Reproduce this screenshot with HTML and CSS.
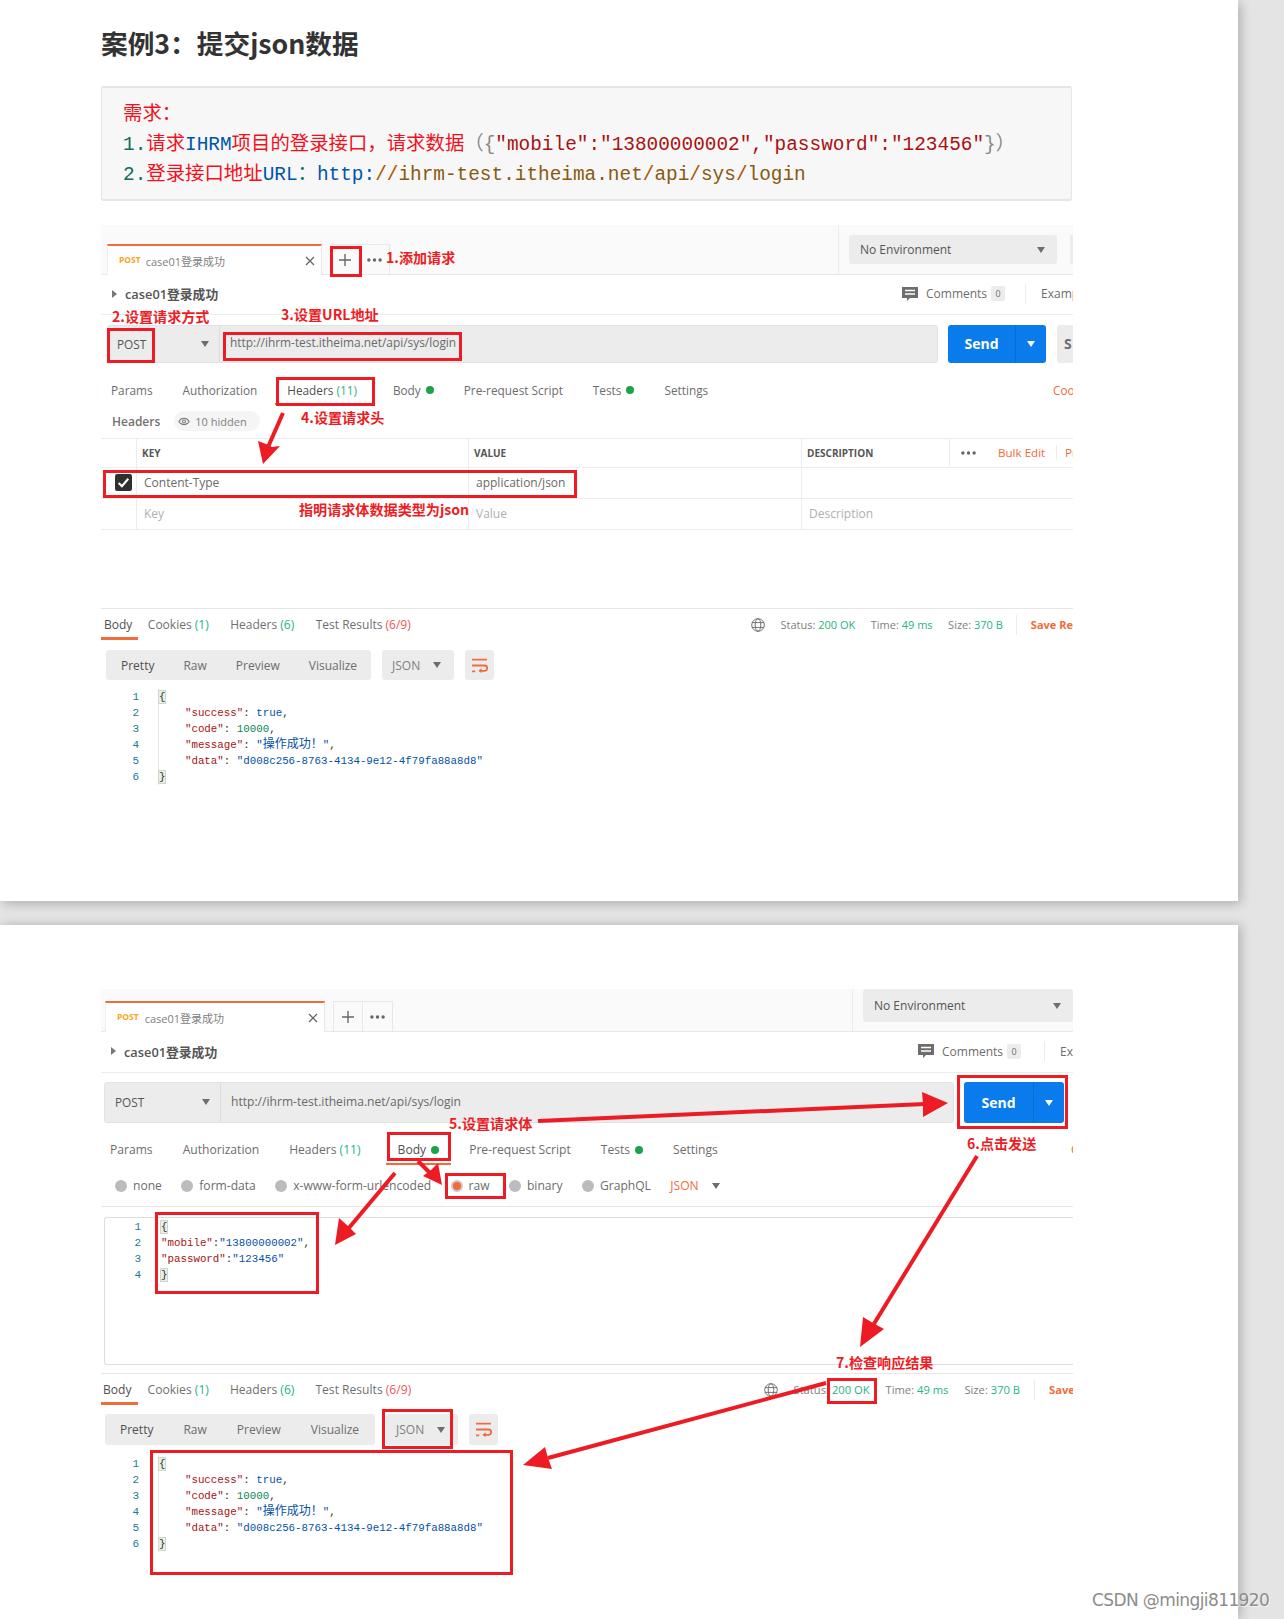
FILE: index.html
```html
<!DOCTYPE html>
<html lang="zh">
<head>
<meta charset="utf-8">
<title>案例3：提交json数据</title>
<link rel="stylesheet" href="styles.css">
</head>
<body>
<section class="page page-one">
  <h1 class="title">案例3：提交json数据</h1>
  <pre class="req"><span class="r">需求：</span>
<span class="g">1.</span><span class="r">请求</span><span class="b">IHRM</span><span class="r">项目的登录接口，请求数据</span><span class="k">（{</span><span class="d">"mobile":"13800000002","password":"123456"</span><span class="k">}）</span>
<span class="g">2.</span><span class="r">登录接口地址</span><span class="b">URL</span><span class="g">：</span><span class="b">http:</span><span class="o">//</span><span class="w">ihrm-test.itheima.net</span><span class="o">/</span><span class="w">api</span><span class="o">/</span><span class="w">sys</span><span class="o">/</span><span class="w">login</span></pre>

  <div class="panel p1">
    <div class="tabbar">
      <div class="rtab"><span class="post">POST</span><span class="rname">case01登录成功</span>
        <svg class="close" viewBox="0 0 10 10"><path d="M1 1l8 8M9 1l-8 8"/></svg></div>
      <div class="adds">
        <span class="addbtn"><svg class="plus" viewBox="0 0 14 14"><path d="M7 0v14M0 7h14"/></svg></span>
        <span class="addbtn last"><svg class="more" viewBox="0 0 16 4"><circle cx="2" cy="2" r="1.8"/><circle cx="8" cy="2" r="1.8"/><circle cx="14" cy="2" r="1.8"/></svg></span>
      </div>
      <div class="envwrap"><div class="env"><span>No Environment</span><i class="caret"></i></div><div class="envstub"></div></div>
    </div>
    <div class="namerow">
      <i class="tri"></i><span class="reqname">case01登录成功</span>
      <div class="meta">
        <svg class="cmt" viewBox="0 0 16 16"><path d="M0 1h16v11H8l-3 3v-3H0z"/><path class="cl" d="M3 4.5h10M3 8h10"/></svg>
        <span class="cmtlabel">Comments</span><span class="badge">0</span><span class="vsep"></span><span class="cmtlabel">Examples</span>
      </div>
    </div>
    <div class="urlrow">
      <div class="urlbar">
        <div class="method"><span>POST</span><i class="caret"></i></div>
        <div class="url">http://ihrm-test.itheima.net/api/sys/login</div>
      </div>
      <div class="send"><span class="sendlabel">Send</span><span class="sendarrow"><i class="caret white"></i></span></div>
      <div class="save">S</div>
    </div>
    <nav class="tabs">
      <span class="tab">Params</span>
      <span class="tab">Authorization</span>
      <span class="tab active">Headers <em class="grn">(11)</em></span>
      <span class="tab">Body<i class="dot"></i></span>
      <span class="tab">Pre-request Script</span>
      <span class="tab">Tests<i class="dot"></i></span>
      <span class="tab">Settings</span>
      <span class="tab cookies">Cookies</span>
    </nav>
    <div class="hdrbar"><strong>Headers</strong>
      <span class="pill"><svg class="eye" viewBox="0 0 14 10"><path d="M1 5c3-5 9-5 12 0-3 5-9 5-12 0z"/><circle cx="7" cy="5" r="1.8"/></svg>10 hidden</span></div>
    <div class="grid">
      <div class="cell c0 th"></div><div class="cell th">KEY</div><div class="cell th">VALUE</div>
      <div class="cell th dcol"><span class="dlabel">DESCRIPTION</span><span class="dmore"><svg class="more" viewBox="0 0 16 4"><circle cx="2" cy="2" r="1.8"/><circle cx="8" cy="2" r="1.8"/><circle cx="14" cy="2" r="1.8"/></svg></span><span class="bulk">Bulk Edit</span><span class="presets">Presets</span></div>
      <div class="cell c0"><svg class="check" viewBox="0 0 16 16"><rect width="16" height="16" rx="2"/><path d="M3.5 8.5l3 3 6-7"/></svg></div>
      <div class="cell">Content-Type</div><div class="cell">application/json</div><div class="cell"></div>
      <div class="cell c0"></div><div class="cell ph">Key</div><div class="cell ph">Value</div><div class="cell ph">Description</div>
    </div>
    <div class="restabs">
      <span class="rt on">Body</span><span class="rt">Cookies <em class="grn">(1)</em></span><span class="rt">Headers <em class="grn">(6)</em></span><span class="rt">Test Results <em class="red">(6/9)</em></span>
      <div class="status">
        <svg class="globe" viewBox="0 0 14 14"><circle cx="7" cy="7" r="6.3"/><ellipse cx="7" cy="7" rx="2.8" ry="6.3"/><path d="M1 4.6h12M1 9.4h12"/></svg>
        <span class="st">Status: <b>200 OK</b></span><span class="st">Time: <b>49 ms</b></span><span class="st">Size: <b>370 B</b></span><span class="vsep"></span><span class="savere">Save Response</span>
      </div>
    </div>
    <div class="toolbar">
      <div class="views"><span class="v on">Pretty</span><span class="v">Raw</span><span class="v">Preview</span><span class="v">Visualize</span></div>
      <div class="fmt"><span>JSON</span><i class="caret"></i></div>
      <div class="wrap"><svg viewBox="0 0 16 14"><path d="M1 1.5h14M1 7h12c3 0 3 5 0 5H8M1 12.5h3"/><path class="wh" d="M10 9.5L7 12l3 2.2z"/></svg></div>
    </div>
    <div class="code">
      <div class="line"><span class="ln">1</span><span class="src"><span class="brace">{</span></span></div>
      <div class="line"><span class="ln">2</span><span class="src">    <span class="key">"success"</span>: <span class="str">true</span>,</span></div>
      <div class="line"><span class="ln">3</span><span class="src">    <span class="key">"code"</span>: <span class="num">10000</span>,</span></div>
      <div class="line"><span class="ln">4</span><span class="src">    <span class="key">"message"</span>: <span class="str">"<span class="cjk">操作成功！</span>"</span>,</span></div>
      <div class="line"><span class="ln">5</span><span class="src">    <span class="key">"data"</span>: <span class="str">"d008c256-8763-4134-9e12-4f79fa88a8d8"</span></span></div>
      <div class="line"><span class="ln">6</span><span class="src"><span class="brace">}</span></span></div>
    </div>
  </div>

  <div class="overlay">
    <span class="mark a1"></span><span class="mark a2"></span><span class="mark a3"></span><span class="mark a4"></span><span class="mark a5"></span>
    <span class="note n1">1.添加请求</span><span class="note n2">2.设置请求方式</span><span class="note n3">3.设置URL地址</span><span class="note n4">4.设置请求头</span><span class="note n5">指明请求体数据类型为json</span>
    <svg class="arrows" viewBox="0 0 1238 901"><path class="ar" d="M283 413l-15 34"/><path class="ah" d="M263 464l-5-23 8 3 6 3 8-1z"/></svg>
  </div>
</section>

<section class="page page-two">
  <div class="panel p2">
    <div class="tabbar">
      <div class="rtab"><span class="post">POST</span><span class="rname">case01登录成功</span>
        <svg class="close" viewBox="0 0 10 10"><path d="M1 1l8 8M9 1l-8 8"/></svg></div>
      <div class="adds">
        <span class="addbtn"><svg class="plus" viewBox="0 0 14 14"><path d="M7 0v14M0 7h14"/></svg></span>
        <span class="addbtn last"><svg class="more" viewBox="0 0 16 4"><circle cx="2" cy="2" r="1.8"/><circle cx="8" cy="2" r="1.8"/><circle cx="14" cy="2" r="1.8"/></svg></span>
      </div>
      <div class="envwrap"><div class="env"><span>No Environment</span><i class="caret"></i></div></div>
    </div>
    <div class="namerow">
      <i class="tri"></i><span class="reqname">case01登录成功</span>
      <div class="meta">
        <svg class="cmt" viewBox="0 0 16 16"><path d="M0 1h16v11H8l-3 3v-3H0z"/><path class="cl" d="M3 4.5h10M3 8h10"/></svg>
        <span class="cmtlabel">Comments</span><span class="badge">0</span><span class="vsep"></span><span class="cmtlabel">Examples</span>
      </div>
    </div>
    <div class="urlrow">
      <div class="urlbar">
        <div class="method"><span>POST</span><i class="caret"></i></div>
        <div class="url">http://ihrm-test.itheima.net/api/sys/login</div>
      </div>
      <div class="send"><span class="sendlabel">Send</span><span class="sendarrow"><i class="caret white"></i></span></div>
    </div>
    <nav class="tabs">
      <span class="tab">Params</span>
      <span class="tab">Authorization</span>
      <span class="tab">Headers <em class="grn">(11)</em></span>
      <span class="tab active">Body<i class="dot"></i></span>
      <span class="tab">Pre-request Script</span>
      <span class="tab">Tests<i class="dot"></i></span>
      <span class="tab">Settings</span>
      <span class="tab cookies">Cookies</span>
    </nav>
    <div class="modes">
      <span class="mode"><i class="radio"></i>none</span>
      <span class="mode"><i class="radio"></i>form-data</span>
      <span class="mode"><i class="radio"></i>x-www-form-urlencoded</span>
      <span class="mode"><i class="radio sel"></i>raw</span>
      <span class="mode"><i class="radio"></i>binary</span>
      <span class="mode"><i class="radio"></i>GraphQL</span>
      <span class="json">JSON</span><i class="caret"></i>
    </div>
    <div class="editor">
      <div class="line"><span class="ln">1</span><span class="src"><span class="brace">{</span></span></div>
      <div class="line"><span class="ln">2</span><span class="src"><span class="key">"mobile"</span>:<span class="str">"13800000002"</span>,</span></div>
      <div class="line"><span class="ln">3</span><span class="src"><span class="key">"password"</span>:<span class="str">"123456"</span></span></div>
      <div class="line"><span class="ln">4</span><span class="src"><span class="brace">}</span></span></div>
    </div>
    <div class="restabs">
      <span class="rt on">Body</span><span class="rt">Cookies <em class="grn">(1)</em></span><span class="rt">Headers <em class="grn">(6)</em></span><span class="rt">Test Results <em class="red">(6/9)</em></span>
      <div class="status">
        <svg class="globe" viewBox="0 0 14 14"><circle cx="7" cy="7" r="6.3"/><ellipse cx="7" cy="7" rx="2.8" ry="6.3"/><path d="M1 4.6h12M1 9.4h12"/></svg>
        <span class="st">Status: <b>200 OK</b></span><span class="st">Time: <b>49 ms</b></span><span class="st">Size: <b>370 B</b></span><span class="vsep"></span><span class="savere">Save Response</span>
      </div>
    </div>
    <div class="toolbar">
      <div class="views"><span class="v on">Pretty</span><span class="v">Raw</span><span class="v">Preview</span><span class="v">Visualize</span></div>
      <div class="fmt"><span>JSON</span><i class="caret"></i></div>
      <div class="wrap"><svg viewBox="0 0 16 14"><path d="M1 1.5h14M1 7h12c3 0 3 5 0 5H8M1 12.5h3"/><path class="wh" d="M10 9.5L7 12l3 2.2z"/></svg></div>
    </div>
    <div class="code">
      <div class="line"><span class="ln">1</span><span class="src"><span class="brace">{</span></span></div>
      <div class="line"><span class="ln">2</span><span class="src">    <span class="key">"success"</span>: <span class="str">true</span>,</span></div>
      <div class="line"><span class="ln">3</span><span class="src">    <span class="key">"code"</span>: <span class="num">10000</span>,</span></div>
      <div class="line"><span class="ln">4</span><span class="src">    <span class="key">"message"</span>: <span class="str">"<span class="cjk">操作成功！</span>"</span>,</span></div>
      <div class="line"><span class="ln">5</span><span class="src">    <span class="key">"data"</span>: <span class="str">"d008c256-8763-4134-9e12-4f79fa88a8d8"</span></span></div>
      <div class="line"><span class="ln">6</span><span class="src"><span class="brace">}</span></span></div>
    </div>
  </div>

  <div class="overlay">
    <svg class="arrows" viewBox="0 0 1238 694">
      <path class="ar" d="M538 196L925 179"/><path class="ah" d="M948 178L922 167l1 12 0 13z"/>
      <path class="ar" d="M418 236L432 250"/><path class="ah" d="M442 260L438 238l-7 7-8 6z"/>
      <path class="ar" d="M395 248L348 304"/><path class="ah" d="M335 320L339 293l9 8 8 8z"/>
      <path class="ar" d="M977 231L872 402"/><path class="ah" d="M860 422L863 392l10 6 11 6z"/>
      <path class="ar" d="M826 458L548 533"/><path class="ah" d="M523 540L545 522l3 11 4 11z"/>
    </svg>
    <span class="mark b1"></span><span class="mark b2"></span><span class="mark b3"></span><span class="mark b4"></span><span class="mark b5"></span><span class="mark b6"></span><span class="mark b7"></span>
    <span class="note m5">5.设置请求体</span><span class="note m6">6.点击发送</span><span class="note m7">7.检查响应结果</span>
  </div>
  <div class="wm">CSDN @mingji811920</div>
</section>
</body>
</html>
```

FILE: styles.css
```css
* { box-sizing: border-box; }
html, body { margin: 0; padding: 0; }
body {
  width: 1284px; height: 1619px; overflow: hidden; background: #e4e4e4;
  font-family: "Open Sans", "Noto Sans CJK SC", sans-serif; color: #6d6d6d;
}
em { font-style: normal; }
i { display: block; }

.page {
  position: relative; width: 1238px; background: #fff; padding-left: 101px;
  box-shadow: 3px 3px 10px rgba(0,0,0,.22);
}
.page-one { height: 901px; margin-bottom: 24px; padding-top: 21px; }
.page-two { height: 694px; padding-top: 64px; box-shadow: 3px 0 10px rgba(0,0,0,.22); }

.title {
  margin: 0; width: 971px; height: 44px; font: 700 26.7px/44px "Noto Sans CJK SC", sans-serif; color: #333;
}
.req {
  margin: 21px 0 24px; width: 971px; height: 115px; padding: 12px 20px 0 21px; background: #f7f7f7;
  border: 1px solid #e3e6ea; border-width: 2px 1px; border-radius: 3px;
  font: 19.4px/30px "Liberation Mono", "Noto Sans CJK SC", monospace; color: #333;
}
.req .r { color: #f01020; }
.req .g { color: #0b6f5a; }
.req .b { color: #0055aa; }
.req .k { color: #8a8a8a; }
.req .d { color: #aa1111; }
.req .o { color: #aa5500; }
.req .w { color: #875a10; }

.panel { width: 972px; overflow: hidden; font-size: 11.8px; }
.tabbar { display: flex; align-items: flex-end; background: #fafafa; border-bottom: 1px solid #e8e8e8; }
.p1 .tabbar { height: 50px; padding-left: 6px; }
.p2 .tabbar { height: 43px; padding-left: 4px; }
.rtab {
  display: flex; align-items: center; background: #fff; height: 31px; margin-bottom: -1px;
  border-top: 2px solid #f26b3a; border-right: 1px solid #e8e8e8; border-left: 1px solid #f0f0f0;
  width: 215px; padding-left: 11px; font-size: 11px; color: #808080;
}
.p2 .rtab { width: 220px; }
.post { font: 700 8.5px/1 "Open Sans", sans-serif; color: #f5a623; margin-right: 5px; }
.p2 .rname { margin-left: 1px; }
.rname { flex: 1; }
.close { width: 10px; height: 10px; margin-right: 6px; fill: none; stroke: #666; stroke-width: 1.3; }
.adds { display: flex; height: 31px; margin-left: 8px; margin-bottom: -1px; border: 1px solid #e8e8e8; border-bottom: 0; }
.addbtn { display: flex; align-items: center; justify-content: center; width: 29px; border-right: 1px solid #e8e8e8; }
.addbtn.last { border-right: 0; }
.more { width: 15px; height: 4px; fill: #666; flex-shrink: 0; }
.plus { width: 12px; height: 12px; fill: none; stroke: #666; stroke-width: 1.6; }
.envwrap { margin-left: auto; align-self: stretch; display: flex; border-left: 1px solid #ececec; padding-left: 10px; padding-top: 10px; }
.p1 .envwrap { width: 235px; }
.p2 .envwrap { width: 221px; padding-top: 0; }
.env {
  display: flex; align-items: center; justify-content: space-between; background: #ececec; border-radius: 3px;
  padding: 0 12px 0 11px; font-size: 12px; font-weight: 500; color: #555; height: 29px; width: 208px; flex-shrink: 0;
}
.p2 .env { width: 210px; height: 33px; }
.envstub { width: 14px; flex-shrink: 0; height: 29px; margin-left: 13px; background: #ececec; }
.caret { width: 0; height: 0; border: 4px solid transparent; border-top: 6px solid #6d6d6d; border-bottom: 0; flex-shrink: 0; }
.caret.white { border-top-color: #fff; }

.namerow { display: flex; align-items: center; height: 40px; border-bottom: 1px solid #ececec; padding-left: 11px; padding-bottom: 2px; }
.p2 .namerow { height: 41px; padding-left: 10px; }
.tri { width: 0; height: 0; border: 4px solid transparent; border-left: 5px solid #777; border-right: 0; margin-right: 8px; }
.reqname { font-size: 12.8px; font-weight: 600; color: #555; }
.meta { margin-left: auto; display: flex; align-items: center; width: 171px; flex-shrink: 0; white-space: nowrap; }
.p2 .meta { width: 155px; }
.cmt { width: 16px; height: 16px; fill: #6d6d6d; margin-right: 8px; flex-shrink: 0; }
.cl { fill: none; stroke: #fff; stroke-width: 1.4; }
.cmtlabel { font-size: 12px; color: #6d6d6d; font-weight: 400; }
.badge { width: 14px; height: 15px; background: #ececec; border-radius: 2px; font-size: 9px; text-align: center; line-height: 15px; margin-left: 4px; flex-shrink: 0; }
.vsep { width: 1px; height: 20px; background: #ececec; margin: 0 15px 0 20px; flex-shrink: 0; }
.p2 .meta .vsep { margin-left: 23px; }

.urlrow { display: flex; padding: 10px 0 0 6px; }
.p2 .urlrow { padding: 9px 0 0 3px; }
.urlbar { display: flex; width: 831px; height: 38px; background: #ececec; border: 1px solid #e2e2e2; border-radius: 3px; flex-shrink: 0; }
.p2 .urlbar { width: 850px; height: 41px; }
.method { display: flex; align-items: center; justify-content: space-between; width: 112px; padding: 0 10px 0 9px; border-right: 1px solid #dcdcdc; color: #555; font-weight: 500; flex-shrink: 0; }
.p2 .method { width: 116px; padding: 0 10px 2px 10px; }
.url { padding: 8px 10px 0; color: #6a6a6a; font-size: 11.9px; }
.p2 .url { padding-top: 10px; font-size: 12.1px; }
.send { display: flex; height: 38px; width: 98px; margin-left: 10px; background: #097bed; border-radius: 3px; color: #fff; font-size: 14px; font-weight: 700; flex-shrink: 0; }
.p2 .send { height: 41px; width: 100px; margin-left: 10px; }
.sendlabel { flex: 1; text-align: center; line-height: 38px; }
.p2 .sendlabel { line-height: 41px; }
.sendarrow { width: 31px; border-left: 1px solid #0a6dd2; display: flex; align-items: center; justify-content: center; }
.save { width: 40px; height: 38px; margin-left: 11px; background: #ececec; border-radius: 3px; padding-left: 7px; font-size: 14px; font-weight: 700; line-height: 38px; flex-shrink: 0; }

.tabs { display: flex; height: 30px; padding-left: 10px; gap: 30px; margin-top: 12px; white-space: nowrap; align-items: center; position: relative; }
.p2 .tabs { padding-left: 9px; height: 31px; gap: 30px; font-size: 12.1px; margin-top: 11px; }
.tab { display: flex; align-items: center; white-space: pre; height: 100%; position: relative; }
.tab.active::after { content: ""; position: absolute; left: -12px; right: -12px; bottom: 0; height: 2px; background: #f26b3a; }
.tab.active { color: #505050; }
.p1 .tab.active { margin-right: 6px; }
.p2 .tab.active { margin-left: 7px; }
.grn { color: #26b47f; }
.red { color: #eb5757; }
.dot { width: 8px; height: 8px; border-radius: 50%; background: #1da24a; margin-left: 5px; }
.cookies { color: #f26b3a; position: absolute; left: 952px; }
.p2 .cookies { left: 970px; }

.hdrbar { display: flex; align-items: center; height: 33px; padding: 0 0 1px 11px; font-size: 12px; color: #707070; }
.hdrbar strong { font-weight: 600; }
.pill { display: flex; align-items: center; margin-left: 14px; height: 20px; padding: 0 13px 0 2px; border-radius: 10px; background: #f5f5f5; font-size: 11px; color: #808080; }
.eye { width: 12px; height: 9px; margin: 0 5px 0 2px; fill: none; stroke: #777; stroke-width: 1.2; }

.grid { display: grid; grid-template-columns: 36px 332px 333px 1fr; grid-template-rows: 29px 31px 31px; border-top: 1px solid #ececec; margin-bottom: 78px; }
.cell { display: flex; align-items: center; padding: 0 0 2px 7px; border-bottom: 1px solid #ececec; border-right: 1px solid #ececec; color: #6a6a6a; font-size: 12px; white-space: nowrap; overflow: hidden; }
.cell:nth-child(4n) { border-right: 0; }
.th { font-size: 10px; font-weight: 700; color: #555; padding-left: 5px; padding-bottom: 1px; }
.c0 { justify-content: center; padding-left: 0; }
.ph { color: #b0b0b0; }
.check { width: 17px; height: 17px; margin-left: 10px; }
.check rect { fill: #2f2f2f; }
.check path { fill: none; stroke: #fff; stroke-width: 2; }
.dcol { position: relative; }
.dlabel { width: 142px; flex-shrink: 0; }
.dmore { border-left: 1px solid #ececec; height: 100%; display: flex; align-items: center; padding-left: 11px; width: 49px; flex-shrink: 0; }
.bulk { color: #f26b3a; font-weight: 400; font-size: 11.6px; width: 58px; flex-shrink: 0; }
.presets { color: #f26b3a; font-size: 11.6px; font-weight: 400; border-left: 1px solid #ececec; padding-left: 8px; }

.restabs { display: flex; align-items: center; height: 32px; border-top: 1px solid #e6e6e6; padding-left: 3px; gap: 21.5px; font-size: 12px; white-space: pre; }
.p2 .restabs { margin-top: 8px; padding-left: 2px; gap: 21px; font-size: 12.1px; }
.rt { position: relative; height: 100%; display: flex; align-items: center; color: #707070; }
.rt.on { color: #505050; margin-right: -6px; }
.p2 .rt.on { margin-right: -5px; }
.rt.on::after { content: ""; position: absolute; left: -3px; right: -6px; bottom: 0; height: 3px; background: #f26b3a; }
.status { margin-left: auto; flex-shrink: 0; width: 322px; display: flex; align-items: center; gap: 15.5px; font-size: 11px; color: #808080; overflow: hidden; }
.p2 .status { width: 309.5px; font-size: 11.2px; gap: 16px; }
.st b { font-weight: 400; color: #26b47f; }
.status .vsep { margin: 0 -2px; }
.globe { width: 14px; height: 14px; fill: none; stroke: #666; stroke-width: .9; flex-shrink: 0; }
.savere { color: #f26b3a; font-weight: 700; }

.toolbar { display: flex; height: 30px; margin-top: 10px; padding-left: 5px; gap: 11px; font-size: 12px; }
.p2 .toolbar { height: 31px; margin-top: 9px; padding-left: 4px; }
.views { display: flex; align-items: center; gap: 29px; background: #ececec; width: 265px; padding-left: 15px; border-radius: 3px; color: #6d6d6d; }
.p2 .views { width: 270px; gap: 30px; }
.v.on { color: #505050; }
.fmt { display: flex; align-items: center; gap: 13px; padding-left: 10px; width: 72px; background: #ececec; border-radius: 3px; color: #808080; }
.wrap { width: 29px; background: #ececec; border-radius: 3px; display: flex; align-items: center; justify-content: center; }
.wrap svg { width: 17px; height: 15px; fill: none; stroke: #f26b3a; stroke-width: 1.7; }
.wrap .wh { fill: #f26b3a; stroke: none; }

.code { margin-top: 9px; }
.p2 .code { margin-top: 11px; }
.line { display: flex; height: 16px; font: 10.8px/16px "Liberation Mono", "Noto Sans CJK SC", monospace; }
.ln { width: 38px; text-align: right; color: #237893; font-size: 11px; flex-shrink: 0; }
.src { white-space: pre; color: #333; }
.code .src { border-left: 1px solid #e6e6e6; margin-left: 19px; }
.brace { background: #e9f0e6; outline: 1px solid #cfd6cf; }
.key { color: #a31515; }
.str { color: #0451a5; }
.num { color: #098658; }
.cjk { font-size: 12px; }

.modes { display: flex; align-items: center; height: 42px; border-bottom: 1px solid #e6e6e6; padding-left: 14px; white-space: nowrap; font-size: 12.1px; gap: 19.4px; }
.mode { display: flex; align-items: center; }
.radio { width: 12px; height: 12px; border-radius: 50%; background: #bcbcbc; margin-right: 6px; }
.radio.sel { background: #f26b3a; border: 2px solid #c9c9c9; }
.json { color: #f26b3a; margin-right: -6px; }
.editor { height: 148px; margin-top: 10px; padding-top: 1px; border: 1px solid #ddd; border-right: 0; margin-left: 3px; border-radius: 3px 0 0 3px; }
.editor .ln { width: 36px; }
.editor .src { margin-left: 20px; }

.overlay { position: absolute; left: 0; top: 0; width: 100%; height: 100%; pointer-events: none; }
.arrows { position: absolute; left: 0; top: 0; width: 100%; height: 100%; }
.ar { stroke: #ed1c24; stroke-width: 4; fill: none; }
.ah { fill: #ed1c24; }
.mark { position: absolute; border: 3px solid #ed1c24; }
.note { position: absolute; font: 700 14.1px/20px "Noto Sans CJK SC", sans-serif; color: #ee1c25; white-space: nowrap; }

.a1 { left: 330px; top: 246px; width: 32px; height: 31px; }
.a2 { left: 107px; top: 328px; width: 48px; height: 35px; }
.a3 { left: 223px; top: 332px; width: 239px; height: 29px; }
.a4 { left: 276px; top: 377px; width: 99px; height: 29px; }
.a5 { left: 103px; top: 470px; width: 474px; height: 28px; }
.n1 { left: 386px; top: 247px; }
.n2 { left: 112px; top: 306px; }
.n3 { left: 281px; top: 304px; }
.n4 { left: 301px; top: 407px; }
.n5 { left: 299px; top: 499px; }

.b1 { left: 957px; top: 150px; width: 111px; height: 54px; }
.b2 { left: 387px; top: 207px; width: 64px; height: 29px; }
.b3 { left: 445px; top: 248px; width: 61px; height: 26px; }
.b4 { left: 155px; top: 287px; width: 164px; height: 82px; }
.b5 { left: 827px; top: 453px; width: 50px; height: 26px; }
.b6 { left: 382px; top: 484px; width: 71px; height: 40px; }
.b7 { left: 150px; top: 525px; width: 363px; height: 125px; }
.m5 { left: 449px; top: 188px; }
.m6 { left: 967px; top: 208px; }
.m7 { left: 836px; top: 427px; }

.wm {
  position: absolute; left: 1092px; top: 663px; font: 17px/24px "DejaVu Sans", sans-serif; letter-spacing: -.6px;
  color: #8c8c8c; text-shadow: 1px 1px 0 rgba(255,255,255,.6); white-space: nowrap;
}
```
